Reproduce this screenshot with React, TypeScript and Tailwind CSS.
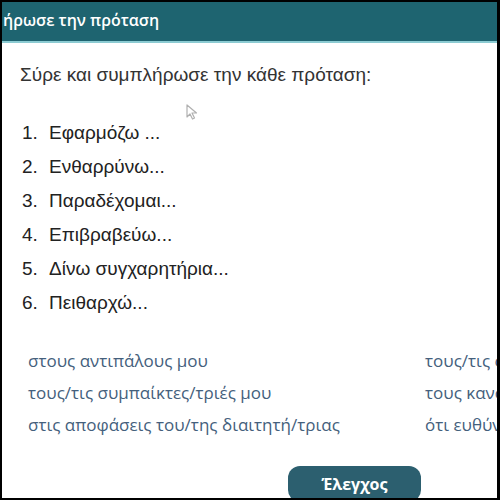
import React from "react";

const items = [
  "Εφαρμόζω ...",
  "Ενθαρρύνω...",
  "Παραδέχομαι...",
  "Επιβραβεύω...",
  "Δίνω συγχαρητήρια...",
  "Πειθαρχώ...",
];

const answers: [string, string][] = [
  ["στους αντιπάλους μου", "τους/τις συμπαίκτες μου"],
  ["τους/τις συμπαίκτες/τριές μου", "τους κανόνες του παιχνιδιού"],
  ["στις αποφάσεις του/της διαιτητή/τριας", "ότι ευθύνομαι"],
];

export default function App() {
  return (
    <div className="w-[500px] h-[500px] bg-black pt-[2px] pl-[2px] pr-[3px] pb-[2px]">
      <div className="relative w-full h-full bg-white flex flex-col overflow-hidden">
        {/* Header */}
        <div className="h-[41px] shrink-0 bg-[#1e6470] border-b-[2px] border-[#8ccbd2] flex items-center">
          <span className="text-white text-[16px] font-semibold pl-[1px] pb-[3px] font-['Open_Sans',sans-serif]">
            ήρωσε την πρόταση
          </span>
        </div>

        {/* Instructions */}
        <p className="mt-[20px] pl-[18px] text-[19px] leading-[24px] text-[#333] font-['Liberation_Sans',Arial,sans-serif]">
          Σύρε και συμπλήρωσε την κάθε πρόταση:
        </p>

        <ol className="mt-[29px] pl-[20px] flex flex-col font-['Liberation_Sans',Arial,sans-serif] text-[19px] text-[#222]">
          {items.map((t, i) => (
            <li key={i} className="h-[34px] flex items-center">
              <span className="w-[27px]">{i + 1}.</span>
              <span>{t}</span>
            </li>
          ))}
        </ol>

        {/* Draggable answers */}
        <div className="mt-[25px] flex flex-col font-['Open_Sans',sans-serif] text-[17px] font-medium text-[#44607c]">
          {answers.map(([a, b], i) => (
            <div key={i} className="h-[32px] flex items-center whitespace-nowrap">
              <span className="w-[423px] shrink-0 pl-[26px]">{a}</span>
              <span>{b}</span>
            </div>
          ))}
        </div>

        <div className="mt-[25px] pl-[286px]">
          <button className="w-[133px] h-[36px] rounded-[12px] bg-[#2c5f6f] text-white text-[16px] font-bold font-['Open_Sans',sans-serif]">
            Έλεγχος
          </button>
        </div>

        {/* mouse cursor */}
        <svg
          className="absolute left-[184px] top-[102px]"
          width="12"
          height="16"
          viewBox="0 0 12 16"
        >
          <path
            d="M1 1 L1 13 L4 10 L6.5 15 L8.5 14 L6 9 L10.5 9 Z"
            fill="#fff"
            stroke="#b0b0b0"
            strokeWidth="1.2"
            strokeLinejoin="round"
          />
        </svg>
      </div>
    </div>
  );
}
